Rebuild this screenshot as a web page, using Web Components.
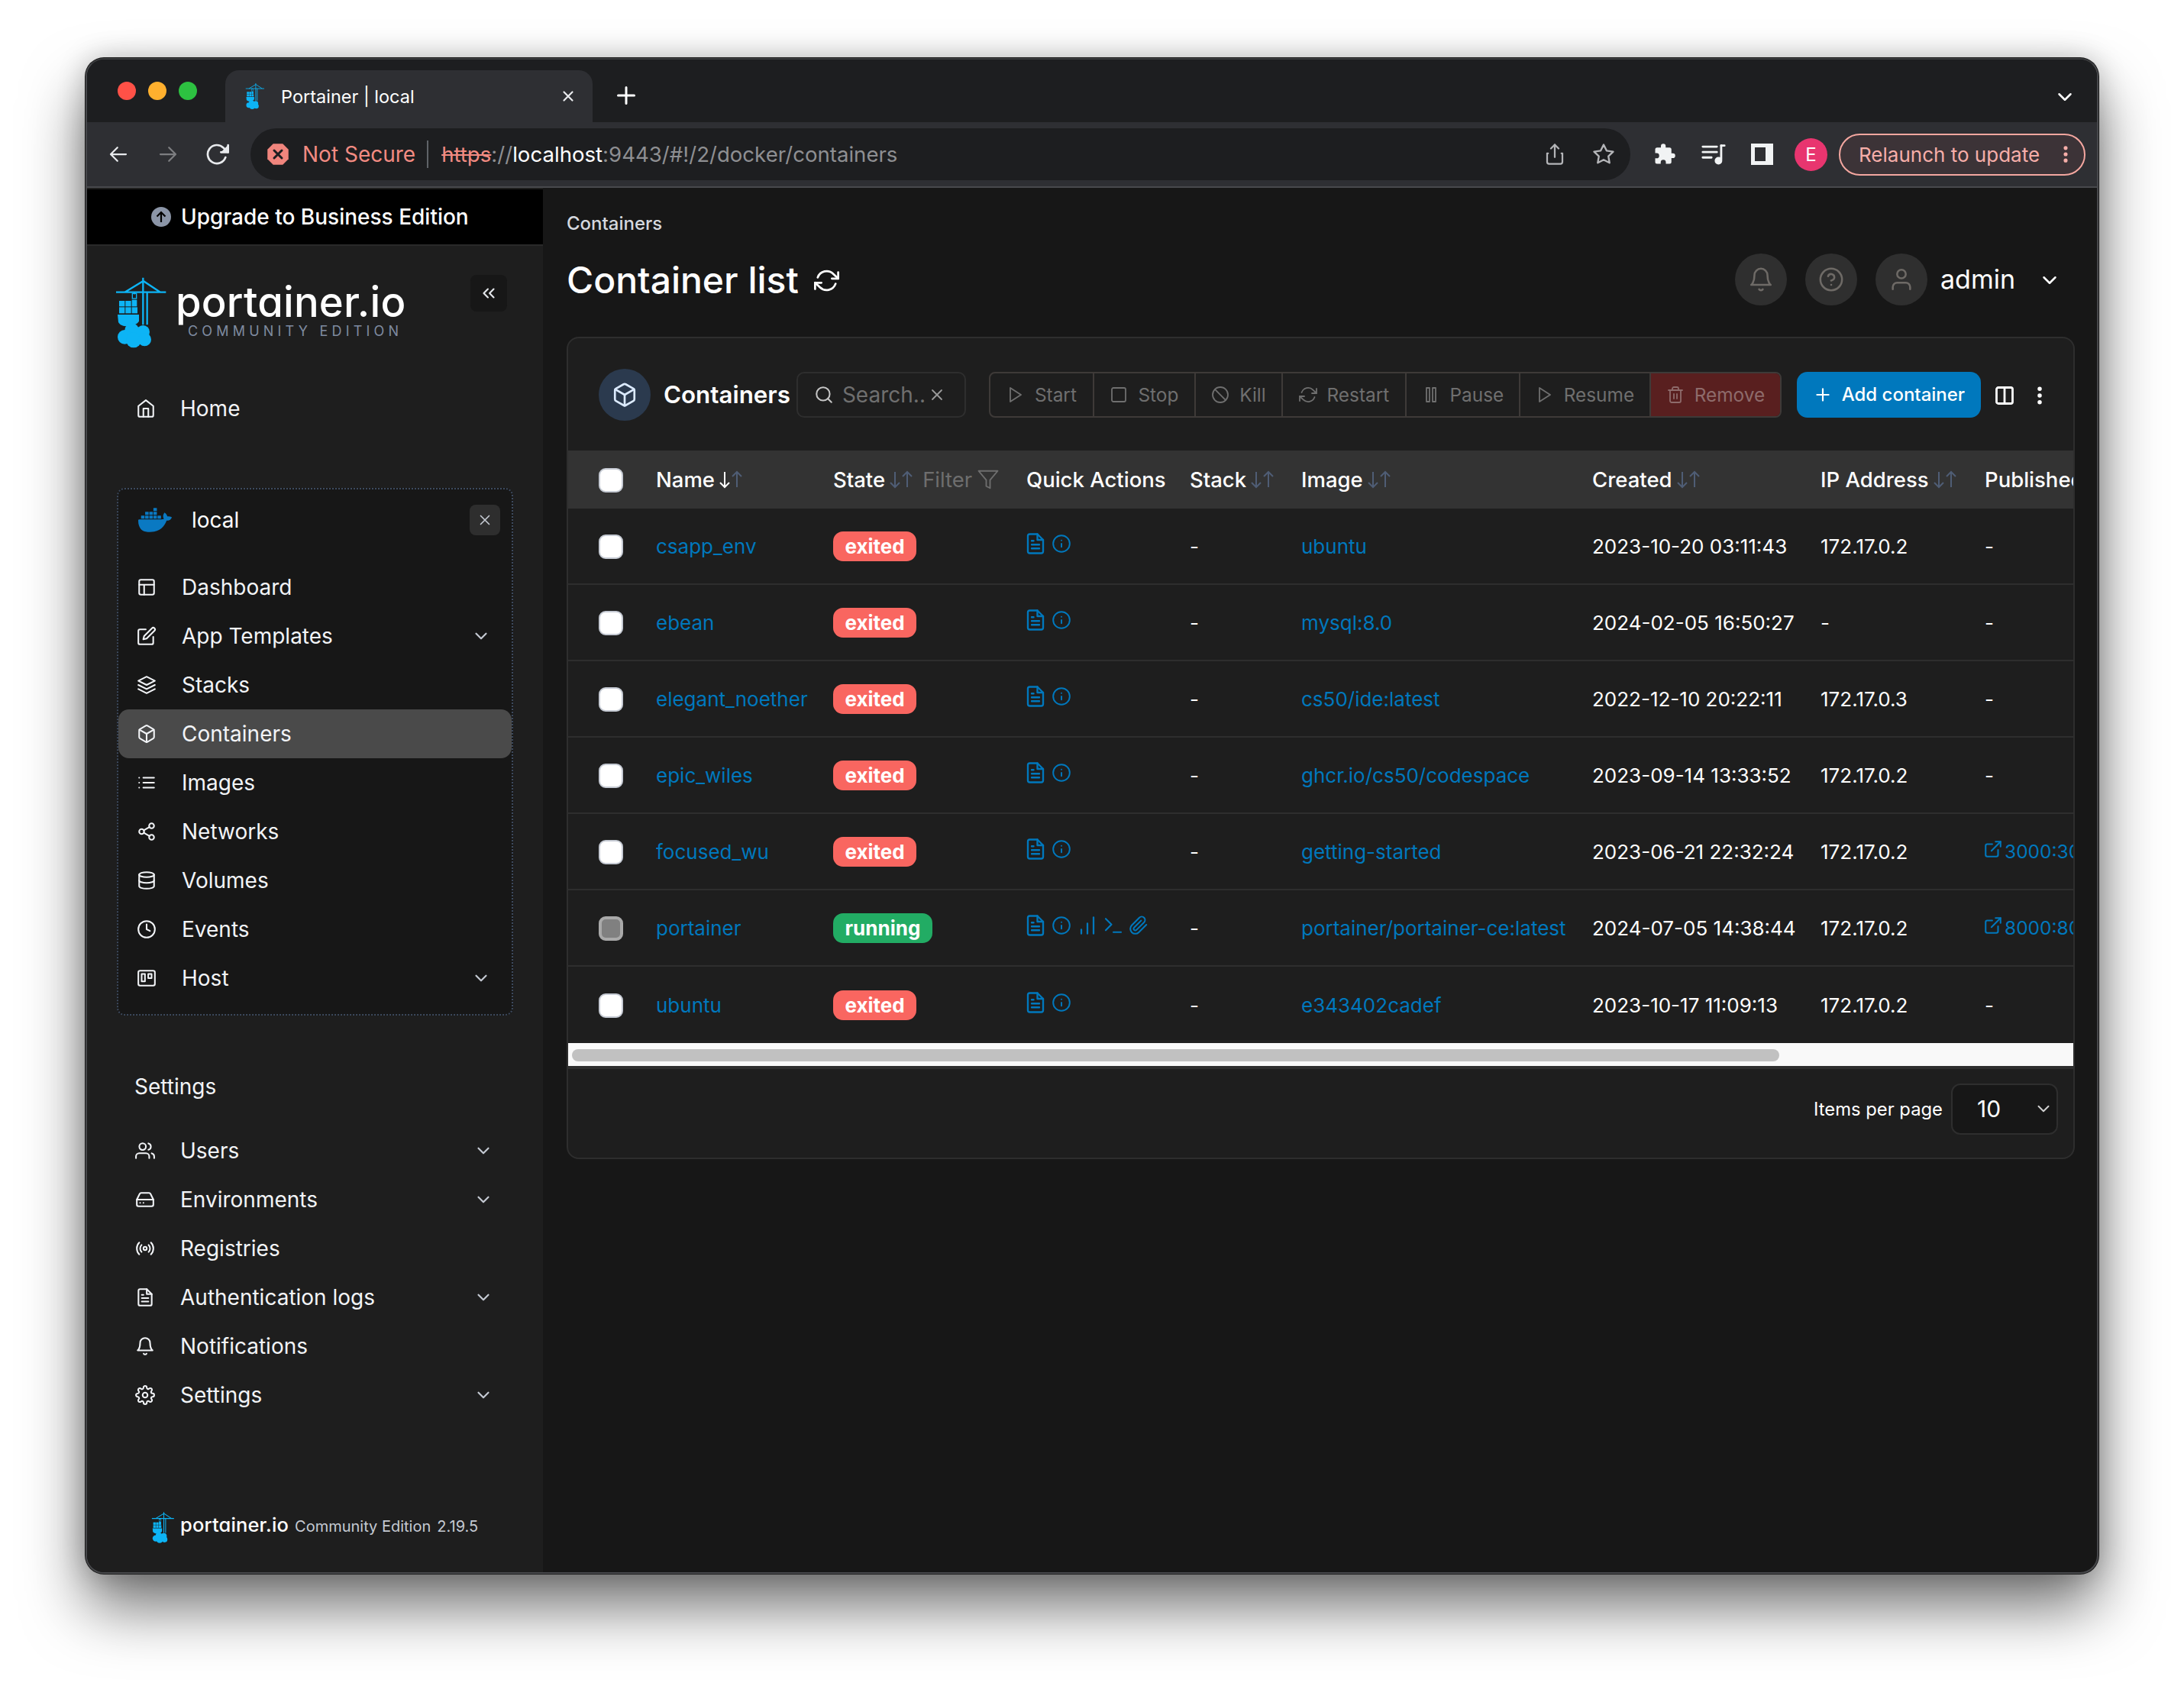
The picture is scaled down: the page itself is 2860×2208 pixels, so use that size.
<!DOCTYPE html>
<html>
<head>
<meta charset="utf-8">
<title>Portainer | local</title>
<style>
  html, body { margin: 0; padding: 0; background: #fff; }
  body { width: 2860px; height: 2208px; overflow: hidden; font-family: Inter, "Liberation Sans", sans-serif; }
</style>
</head>
<body>

<win-frame>
  <chrome-bar slot="chrome"></chrome-bar>
  <pt-sidebar slot="side">
    <side-item icon="home" x="64" text-x="122">Home</side-item>
  </pt-sidebar>
  <pt-main slot="main"></pt-main>
</win-frame>

<script>
const ICONS = {
  home: '<path d="M3 9l9-7 9 7v11a2 2 0 0 1-2 2H5a2 2 0 0 1-2-2z"/><path d="M9 22V12h6v10"/>',
  layout: '<rect x="3" y="3" width="18" height="18" rx="2"/><path d="M3 9h18M9 21V9"/>',
  edit: '<path d="M11 4H4a2 2 0 0 0-2 2v14a2 2 0 0 0 2 2h14a2 2 0 0 0 2-2v-7"/><path d="M18.5 2.5a2.121 2.121 0 0 1 3 3L12 15l-4 1 1-4 9.5-9.5z"/>',
  layers: '<path d="M12 2 2 7l10 5 10-5-10-5z"/><path d="M2 17l10 5 10-5"/><path d="M2 12l10 5 10-5"/>',
  box: '<path d="M21 16V8a2 2 0 0 0-1-1.73l-7-4a2 2 0 0 0-2 0l-7 4A2 2 0 0 0 3 8v8a2 2 0 0 0 1 1.73l7 4a2 2 0 0 0 2 0l7-4A2 2 0 0 0 21 16z"/><path d="M3.27 6.96 12 12.01l8.73-5.05"/><path d="M12 22.08V12"/>',
  list: '<path d="M8 6h13M8 12h13M8 18h13M3 6h.01M3 12h.01M3 18h.01"/>',
  share2: '<circle cx="18" cy="5" r="3"/><circle cx="6" cy="12" r="3"/><circle cx="18" cy="19" r="3"/><path d="M8.59 13.51l6.83 3.98M15.41 6.51l-6.82 3.98"/>',
  database: '<ellipse cx="12" cy="5" rx="9" ry="3"/><path d="M21 12c0 1.66-4 3-9 3s-9-1.34-9-3"/><path d="M3 5v14c0 1.66 4 3 9 3s9-1.34 9-3V5"/>',
  clock: '<circle cx="12" cy="12" r="10"/><path d="M12 6v6l4 2"/>',
  host: '<rect x="2" y="3" width="20" height="18" rx="2"/><rect x="6" y="7" width="4" height="9"/><rect x="14" y="7" width="4" height="5"/>',
  users: '<path d="M17 21v-2a4 4 0 0 0-4-4H5a4 4 0 0 0-4 4v2"/><circle cx="9" cy="7" r="4"/><path d="M23 21v-2a4 4 0 0 0-3-3.87"/><path d="M16 3.13a4 4 0 0 1 0 7.75"/>',
  drive: '<path d="M22 12H2"/><path d="M5.45 5.11 2 12v6a2 2 0 0 0 2 2h16a2 2 0 0 0 2-2v-6l-3.45-6.89A2 2 0 0 0 16.76 4H7.24a2 2 0 0 0-1.79 1.11z"/><path d="M6 16h.01M10 16h.01"/>',
  radio: '<circle cx="12" cy="12" r="2"/><path d="M16.24 7.76a6 6 0 0 1 0 8.49"/><path d="M7.76 16.24a6 6 0 0 1 0-8.49"/><path d="M19.07 4.93a10 10 0 0 1 0 14.14"/><path d="M4.93 19.07a10 10 0 0 1 0-14.14"/>',
  file: '<path d="M14 2H6a2 2 0 0 0-2 2v16a2 2 0 0 0 2 2h12a2 2 0 0 0 2-2V8z"/><path d="M14 2v6h6"/><path d="M16 13H8M16 17H8M10 9H8"/>',
  bell: '<path d="M18 8A6 6 0 0 0 6 8c0 7-3 9-3 9h18s-3-2-3-9"/><path d="M13.73 21a2 2 0 0 1-3.46 0"/>',
  settings: '<circle cx="12" cy="12" r="3"/><path d="M19.4 15a1.65 1.65 0 0 0 .33 1.82l.06.06a2 2 0 0 1 0 2.83 2 2 0 0 1-2.83 0l-.06-.06a1.65 1.65 0 0 0-1.82-.33 1.65 1.65 0 0 0-1 1.51V21a2 2 0 0 1-2 2 2 2 0 0 1-2-2v-.09A1.65 1.65 0 0 0 9 19.4a1.65 1.65 0 0 0-1.82.33l-.06.06a2 2 0 0 1-2.83 0 2 2 0 0 1 0-2.83l.06-.06a1.65 1.65 0 0 0 .33-1.82 1.65 1.65 0 0 0-1.51-1H3a2 2 0 0 1-2-2 2 2 0 0 1 2-2h.09A1.65 1.65 0 0 0 4.6 9a1.65 1.65 0 0 0-.33-1.82l-.06-.06a2 2 0 0 1 0-2.83 2 2 0 0 1 2.83 0l.06.06a1.65 1.65 0 0 0 1.82.33H9a1.65 1.65 0 0 0 1-1.51V3a2 2 0 0 1 2-2 2 2 0 0 1 2 2v.09a1.65 1.65 0 0 0 1 1.51 1.65 1.65 0 0 0 1.82-.33l.06-.06a2 2 0 0 1 2.83 0 2 2 0 0 1 0 2.83l-.06.06a1.65 1.65 0 0 0-.33 1.82V9a1.65 1.65 0 0 0 1.51 1H21a2 2 0 0 1 2 2 2 2 0 0 1-2 2h-.09a1.65 1.65 0 0 0-1.51 1z"/>',
  chevron: '<path d="M6 9l6 6 6-6"/>',
  x: '<path d="M18 6 6 18M6 6l12 12"/>',
  plus: '<path d="M12 5v14M5 12h14"/>',
  play: '<path d="M5 3l14 9-14 9V3z"/>',
  square: '<rect x="3" y="3" width="18" height="18" rx="2"/>',
  slash: '<circle cx="12" cy="12" r="10"/><path d="M4.93 4.93l14.14 14.14"/>',
  refresh: '<path d="M23 4v6h-6"/><path d="M1 20v-6h6"/><path d="M3.51 9a9 9 0 0 1 14.85-3.36L23 10M1 14l4.64 4.36A9 9 0 0 0 20.49 15"/>',
  pause: '<rect x="6" y="3" width="4" height="18"/><rect x="14" y="3" width="4" height="18"/>',
  trash: '<path d="M3 6h18"/><path d="M19 6v14a2 2 0 0 1-2 2H7a2 2 0 0 1-2-2V6m3 0V4a2 2 0 0 1 2-2h4a2 2 0 0 1 2 2v2"/><path d="M10 11v6M14 11v6"/>',
  search: '<circle cx="11" cy="11" r="8"/><path d="M21 21l-4.35-4.35"/>',
  filter: '<polygon points="22 3 2 3 10 12.46 10 19 14 21 14 12.46 22 3"/>',
  info: '<circle cx="12" cy="12" r="10"/><path d="M12 16v-4M12 8h.01"/>',
  bars: '<path d="M12 20V10M18 20V4M6 20v-4"/>',
  terminal: '<path d="M4 17l6-6-6-6"/><path d="M12 19h8"/>',
  clip: '<path d="M21.44 11.05l-9.19 9.19a6 6 0 0 1-8.49-8.49l9.19-9.19a4 4 0 0 1 5.66 5.66l-9.2 9.19a2 2 0 0 1-2.83-2.83l8.49-8.48"/>',
  external: '<path d="M18 13v6a2 2 0 0 1-2 2H5a2 2 0 0 1-2-2V8a2 2 0 0 1 2-2h6"/><path d="M15 3h6v6"/><path d="M10 14 21 3"/>',
  help: '<circle cx="12" cy="12" r="10"/><path d="M9.09 9a3 3 0 0 1 5.83 1c0 2-3 3-3 3"/><path d="M12 17h.01"/>',
  user: '<path d="M20 21v-2a4 4 0 0 0-4-4H8a4 4 0 0 0-4 4v2"/><circle cx="12" cy="7" r="4"/>',
  columns: '<rect x="3" y="3" width="18" height="18" rx="2"/><path d="M12 3v18"/>',
  back: '<path d="M20 12H4M11 19l-7-7 7-7"/>',
  forward: '<path d="M4 12h16M13 5l7 7-7 7"/>',
  reload: '<path d="M20.49 15a9 9 0 1 1-2.12-9.36L23 10"/><path d="M23 3v7h-7" fill="currentColor"/>',
  upload: '<path d="M5 11H4v9a2 2 0 0 0 2 2h12a2 2 0 0 0 2-2v-9h-1"/><path d="M16 6l-4-4-4 4"/><path d="M12 2v13"/>',
  star: '<polygon points="12 2 15.09 8.26 22 9.27 17 14.14 18.18 21.02 12 17.77 5.82 21.02 7 14.14 2 9.27 8.91 8.26 12 2"/>',
  media: '<path d="M2 5h13M2 10h13M2 15h8M19 4v13"/><path d="M19 4h3"/><circle cx="16.5" cy="18" r="2.5" fill="currentColor"/>',
  dots: '<circle cx="12" cy="5" r="1.2" fill="currentColor"/><circle cx="12" cy="12" r="1.2" fill="currentColor"/><circle cx="12" cy="19" r="1.2" fill="currentColor"/>',
  dblleft: '<path d="M11 17l-5-5 5-5M18 17l-5-5 5-5"/>'
};

const DOCKER = 'M13.983 11.078h2.119a.186.186 0 00.186-.185V9.006a.186.186 0 00-.186-.186h-2.119a.185.185 0 00-.185.185v1.888c0 .102.083.185.185.185m-2.954-5.43h2.118a.186.186 0 00.186-.186V3.574a.186.186 0 00-.186-.185h-2.118a.185.185 0 00-.185.185v1.888c0 .102.082.185.185.186m0 2.716h2.118a.187.187 0 00.186-.186V6.29a.186.186 0 00-.186-.185h-2.118a.185.185 0 00-.185.185v1.887c0 .102.082.185.185.186m-2.93 0h2.12a.186.186 0 00.184-.186V6.29a.185.185 0 00-.185-.185H8.1a.185.185 0 00-.185.185v1.887c0 .102.083.185.185.186m-2.964 0h2.119a.186.186 0 00.185-.186V6.29a.185.185 0 00-.185-.185H5.136a.186.186 0 00-.186.185v1.887c0 .102.084.185.186.186m5.893 2.715h2.118a.186.186 0 00.186-.185V9.006a.186.186 0 00-.186-.186h-2.118a.185.185 0 00-.185.185v1.888c0 .102.082.185.185.185m-2.93 0h2.12a.185.185 0 00.184-.185V9.006a.185.185 0 00-.184-.186h-2.12a.185.185 0 00-.184.185v1.888c0 .102.083.185.185.185m-2.964 0h2.119a.185.185 0 00.185-.185V9.006a.185.185 0 00-.184-.186h-2.12a.186.186 0 00-.186.186v1.887c0 .102.084.185.186.185m-2.92 0h2.12a.185.185 0 00.184-.185V9.006a.185.185 0 00-.184-.186h-2.12a.185.185 0 00-.185.185v1.888c0 .102.083.185.185.185M23.763 9.89c-.065-.051-.672-.51-1.954-.51-.338.001-.676.03-1.01.087-.248-1.7-1.653-2.53-1.716-2.566l-.344-.199-.226.327c-.284.438-.49.922-.612 1.43-.23.97-.09 1.882.403 2.661-.595.332-1.55.413-1.744.42H.751a.751.751 0 00-.75.748 11.376 11.376 0 00.692 4.062c.545 1.428 1.355 2.48 2.41 3.124 1.18.723 3.1 1.137 5.275 1.137.983.003 1.963-.086 2.93-.266a12.248 12.248 0 003.823-1.389c.98-.567 1.86-1.288 2.61-2.136 1.252-1.418 1.998-2.997 2.553-4.4h.221c1.372 0 2.215-.549 2.68-1.009.309-.293.55-.65.707-1.046l.098-.288Z';

// crane + cloud logo, coords taken from the 3x crop of the reference
function craneLogo(w, h) {
  return `<svg width="${w}" height="${h}" viewBox="60 60 210 285" style="display:block;flex:none">
    <g fill="none" stroke="#0db4f5" stroke-width="7">
      <path d="M66 122H262M172 65V250M188 122V250M100 122L173 78L240 122"/>
      <path d="M138 122v8" /></g>
    <g fill="#0db4f5">
      <rect x="130" y="127" width="16" height="20" fill="none" stroke="#0db4f5" stroke-width="4"/>
      <rect x="78" y="156" width="22" height="22"/><rect x="103" y="156" width="22" height="22"/>
      <rect x="78" y="181" width="22" height="24"/><rect x="103" y="181" width="22" height="24"/><rect x="128" y="181" width="22" height="24"/>
      <rect x="128" y="152" width="20" height="26"/>
      <path d="M72 210H156V235C150 255 90 268 75 240Z"/>
      <circle cx="128" cy="272" r="28"/><circle cx="172" cy="278" r="26"/><circle cx="100" cy="298" r="28"/>
      <circle cx="135" cy="310" r="30"/><circle cx="178" cy="308" r="26"/>
    </g>
  </svg>`;
}

function sortArrows(active) {
  const dn = active ? '#fff' : '#4f5d75';
  return `<svg width="32" height="24" viewBox="0 0 32 24" fill="none" stroke-width="2" style="flex:none;margin-left:5px">
    <path d="M8 2V22M2 16L8 22L14 16" stroke="${dn}"/><path d="M24 22V2M18 8L24 2L30 8" stroke="#4f5d75"/></svg>`;
}

class UiIcon extends HTMLElement {
  connectedCallback() {
    const size = this.getAttribute('size') || 24;
    const sw = this.getAttribute('sw') || 2;
    this.attachShadow({ mode: 'open' }).innerHTML = `
      <style>:host{display:inline-flex;flex:none;width:${size}px;height:${size}px}svg{display:block}</style>
      <svg width="${size}" height="${size}" viewBox="0 0 24 24" fill="none" stroke="currentColor" stroke-width="${sw}" stroke-linecap="round" stroke-linejoin="round">${ICONS[this.getAttribute('name')] || ''}</svg>`;
  }
}

class WinFrame extends HTMLElement {
  constructor() {
    super();
    this.attachShadow({ mode: 'open' }).innerHTML = `
      <style>
        :host {
          display: flex; flex-direction: column; box-sizing: border-box;
          width: 2636px; height: 1985px; margin: 76px 0 0 112px;
          border: 2px solid #47484b; border-top-color: #3a3b3d; border-radius: 24px;
          background: #171717; overflow: hidden;
          box-shadow: 0 0 0 1px #1a1a1a, 0 44px 80px rgba(0,0,0,.55), 0 0 36px rgba(0,0,0,.22);
        }
        .body { flex: 1; display: flex; min-height: 0; }
      </style>
      <slot name="chrome"></slot>
      <div class="body"><slot name="side"></slot><slot name="main"></slot></div>`;
  }
}

class ChromeBar extends HTMLElement {
  constructor() {
    super();
    this.attachShadow({ mode: 'open' }).innerHTML = `
      <style>
        :host { display: block; font-family: Inter, sans-serif; color: #fff; flex: none; }
        .strip { height: 82px; background: #1d1e20; display: flex; align-items: flex-end; position: relative; }
        .lights { display: flex; gap: 16px; padding: 0 0 29px 40px; width: 142px; box-sizing: border-box; align-self: flex-end; }
        .lights i { width: 24px; height: 24px; border-radius: 50%; flex: none; }
        .tab { width: 481px; height: 68px; background: #2e2f33; border-radius: 18px 18px 0 0; display: flex; align-items: center; box-sizing: border-box; padding-left: 26px; font-size: 23.5px; margin-left: 39px; }
        .tab span { margin-left: 21px; flex: 1; }
        .tab ui-icon { margin-right: 21px; }
        .plus { margin: 0 0 17px 26px; }
        .tail { margin: 0 0 18px auto; padding-right: 27px; }
        .tools { height: 84px; background: #2e2f33; border-bottom: 2px solid #48494d; display: flex; align-items: center; }
        .nav { display: flex; align-items: center; width: 214px; padding-left: 26px; box-sizing: border-box; flex: none; color: #e8eaed; }
        .addr { width: 1807px; height: 68px; background: #1d1e20; border-radius: 34px; display: flex; align-items: center; box-sizing: border-box; padding-left: 21px; font-size: 28px; flex: none; }
        .ns { color: #f28b82; margin-left: 17px; }
        .sep { width: 2px; height: 36px; background: #5f6368; margin: 0 17px 0 15px; }
        .url { color: #8e8f92; font-size: 27.6px; }
        .url s { color: #f28b82; }
        .url b { color: #fff; font-weight: 400; }
        .addr .r { margin-left: auto; display: flex; gap: 34px; padding-right: 20px; color: #b4b5b8; }
        .ext { display: flex; align-items: center; color: #f1f3f4; margin-left: 30px; gap: 32px; }
        .side { width: 29px; height: 28px; box-sizing: border-box; border: 5px solid #f1f3f4; border-right-width: 10px; flex: none; }
        .ava { width: 43px; height: 43px; border-radius: 50%; background: #e8356f; display: flex; align-items: center; justify-content: center; font-size: 24px; margin-left: 28px; flex: none; }
        .relaunch { margin-left: 15px; width: 323px; height: 55px; box-sizing: border-box; border: 2px solid #f4a7a0; border-radius: 28px; background: #3c3337; color: #f6aea9; display: flex; align-items: center; font-size: 26px; padding-left: 24px; flex: none; }
        .relaunch ui-icon { margin-left: auto; margin-right: 10px; }
      </style>
      <div class="strip">
        <div class="lights"><i style="background:#ff5147"></i><i style="background:#ffb02e"></i><i style="background:#2dc141"></i></div>
        <div class="tab">${craneLogo(26, 40)}<span>Portainer | local</span><ui-icon name="x" size="22" sw="2.4" style="color:#e8eaed"></ui-icon></div>
        <ui-icon class="plus" name="plus" size="36" sw="2"></ui-icon>
        <ui-icon class="tail" name="chevron" size="30" sw="2"></ui-icon>
      </div>
      <div class="tools">
        <div class="nav">
          <ui-icon name="back" size="30" sw="1.8"></ui-icon>
          <ui-icon name="forward" size="30" sw="1.8" style="color:#7d7e81;margin-left:35px"></ui-icon>
          <ui-icon name="reload" size="32" sw="2" style="margin-left:33px"></ui-icon>
        </div>
        <div class="addr">
          <svg width="30" height="30" viewBox="0 0 24 24" style="flex:none"><polygon points="7 1 17 1 23 7 23 17 17 23 7 23 1 17 1 7" fill="#f0857d"/><path d="M8 8l8 8M16 8l-8 8" stroke="#1d1e20" stroke-width="2.4" stroke-linecap="round"/></svg>
          <span class="ns">Not Secure</span><span class="sep"></span>
          <span class="url"><s>https</s>://<b>localhost</b>:9443/#!/2/docker/containers</span>
          <div class="r"><ui-icon name="upload" size="30" sw="1.8"></ui-icon><ui-icon name="star" size="30" sw="1.9"></ui-icon></div>
        </div>
        <div class="ext">
          <svg width="30" height="30" viewBox="0 0 24 24" fill="currentColor" style="flex:none"><path d="M20.5 11H19V7a2 2 0 0 0-2-2h-4V3.5a2.5 2.5 0 0 0-5 0V5H4a2 2 0 0 0-2 2v3.8h1.5a2.7 2.7 0 0 1 0 5.4H2V20a2 2 0 0 0 2 2h3.8v-1.5a2.7 2.7 0 0 1 5.4 0V22H17a2 2 0 0 0 2-2v-4h1.5a2.5 2.5 0 0 0 0-5z"/></svg>
          <ui-icon name="media" size="34" sw="2"></ui-icon>
          <div class="side"></div>
        </div>
        <div class="ava">E</div>
        <div class="relaunch">Relaunch to update<ui-icon name="dots" size="28" sw="2"></ui-icon></div>
      </div>`;
  }
}

class SideItem extends HTMLElement {
  connectedCallback() {
    const x = this.getAttribute('x') || 64, tx = this.getAttribute('text-x') || 122;
    const chev = this.hasAttribute('chevron');
    const cx = this.getAttribute('chev-r') || 31;
    this.attachShadow({ mode: 'open' }).innerHTML = `
      <style>
        :host { display: flex; align-items: center; height: 64px; box-sizing: border-box; font-size: 28px; color: #f2f4f7; padding-left: ${x}px; border-radius: 14px; }
        :host([active]) { background: #4a4a4a; height: 64px; }
        .ic { width: ${tx - x}px; flex: none; display: flex; }
        .lb { flex: 1; }
        .ch { color: #c5cad3; margin-right: ${cx}px; }
      </style>
      <div class="ic"><ui-icon name="${this.getAttribute('icon')}" size="${this.getAttribute('size') || 26}" sw="${this.getAttribute('sw') || 1.9}"></ui-icon></div>
      <div class="lb"><slot></slot></div>
      ${chev ? '<ui-icon class="ch" name="chevron" size="26" sw="2"></ui-icon>' : ''}`;
  }
}

class PtSidebar extends HTMLElement {
  constructor() {
    super();
    const env = [['layout','Dashboard'],['edit','App Templates',1],['layers','Stacks'],['box','Containers',0,1],['list','Images'],['share2','Networks'],['database','Volumes'],['clock','Events'],['host','Host',1]];
    const set = [['users','Users',1],['drive','Environments',1],['radio','Registries'],['file','Authentication logs',1],['bell','Notifications'],['settings','Settings',1]];
    this.attachShadow({ mode: 'open' }).innerHTML = `
      <style>
        :host { display: flex; flex-direction: column; width: 597px; height: 100%; background: #1e1e1e; font-family: Inter, sans-serif; color: #fff; flex: none; }
        .up { height: 72px; margin-top: 2px; background: #000; border-bottom: 2px solid #2a2a2a; display: flex; align-items: center; padding-left: 84px; font-size: 28px; font-weight: 500; gap: 13px; box-sizing: content-box; }
        .brand { height: 181px; box-sizing: border-box; padding: 38px 0 0 36px; display: flex; }
        .wm { margin-left: 10px; }
        .wm .t { font-size: 54.4px; line-height: 60px; font-weight: 500; font-feature-settings: "cv11"; letter-spacing: .2px; margin-top: 5px; }
        .wm .c { font-size: 18px; line-height: 20px; letter-spacing: 5.2px; color: #7f8ba0; margin: -1px 0 0 16px; white-space: nowrap; }
        .col { width: 48px; height: 48px; border-radius: 8px; background: #171717; margin-left: auto; margin-right: 47px; display: flex; align-items: center; justify-content: center; color: #e3e6ea; }
        .env { margin: 72px 25px 0 39px; width: 519px; box-sizing: border-box; height: 691px; border: 2px dotted #3d4a5e; border-radius: 10px; background: #171717; }
        .env-h { height: 40px; margin-top: 20px; display: flex; align-items: center; padding-left: 26px; font-size: 28px; }
        .env-h span { margin-left: 26px; flex: 1; }
        .close { width: 40px; height: 40px; background: #2e2e2e; border-radius: 8px; margin-right: 15px; display: flex; align-items: center; justify-content: center; color: #c5cad3; }
        .env-items { margin-top: 36px; }
        .head { font-size: 28px; margin: 76px 0 0 62px; line-height: 34px; color: #f2f4f7; }
        .set { margin-top: 35px; }
        .foot { margin-top: auto; height: 81px; display: flex; align-items: flex-start; padding-left: 84px; }
        .foot .t { font-size: 25.5px; font-weight: 500; font-feature-settings: "cv11"; margin: -1px 0 0 7px; line-height: 40px; letter-spacing: .15px; }
        .foot .c { font-size: 20px; color: #c5cad3; margin: 3px 0 0 8px; line-height: 36px; white-space: nowrap; }
        .foot .c + .c { margin-left: 8px; }
      </style>
      <div class="up">
        <svg width="26" height="26" viewBox="0 0 26 26" style="flex:none"><circle cx="13" cy="13" r="13" fill="#8b95a7"/><path d="M13 20V7M7.5 12.5L13 7l5.5 5.5" fill="none" stroke="#000" stroke-width="2.2"/></svg>
        <span>Upgrade to Business Edition</span>
      </div>
      <div class="brand">
        <div style="margin-top:2px">${craneLogo(70, 95)}</div>
        <div class="wm"><div class="t">portainer.io</div><div class="c">COMMUNITY EDITION</div></div>
        <div class="col"><ui-icon name="dblleft" size="26" sw="2"></ui-icon></div>
      </div>
      <slot></slot>
      <div class="env">
        <div class="env-h">
          <svg width="44" height="44" viewBox="0 0 24 24" fill="#0a79c2" style="flex:none"><path d="${DOCKER}"/></svg>
          <span>local</span>
          <div class="close"><ui-icon name="x" size="22" sw="1.8"></ui-icon></div>
        </div>
        <div class="env-items">
          ${env.map(([i, l, c, a]) => `<side-item icon="${i}" x="24" text-x="83" chev-r="27" ${c ? 'chevron' : ''} ${a ? 'active' : ''}>${l}</side-item>`).join('')}
        </div>
      </div>
      <div class="head">Settings</div>
      <div class="set">
        ${set.map(([i, l, c]) => `<side-item icon="${i}" x="63" text-x="122" chev-r="65" ${c ? 'chevron' : ''}>${l}</side-item>`).join('')}
      </div>
      <div class="foot">
        ${craneLogo(31, 45)}
        <div class="t">portainer.io</div><div class="c">Community Edition</div><div class="c">2.19.5</div>
      </div>`;
  }
}

class StateBadge extends HTMLElement {
  constructor() {
    super();
    this.attachShadow({ mode: 'open' }).innerHTML = `
      <style>
        :host { display: inline-flex; align-items: center; height: 39px; border-radius: 13px; padding: 0 15.5px; background: #f96660; color: #fff; font-size: 26px; font-weight: 700; }
        :host([state="running"]) { background: #22ac64; }
      </style><slot></slot>`;
  }
}

class ActionBtn extends HTMLElement {
  connectedCallback() {
    this.attachShadow({ mode: 'open' }).innerHTML = `
      <style>
        :host { display: flex; align-items: center; height: 100%; box-sizing: border-box; font-size: 24.4px; color: #6f6f6f; justify-content: center; gap: 13px; border-right: 2px solid #3e3a38; }
        :host(:last-child) { border-right: 0; }
        :host([danger]) { background: #591f1f; color: #8e6b6b; }
      </style>
      <ui-icon name="${this.getAttribute('icon')}" size="${this.getAttribute('size') || 24}" sw="1.8"></ui-icon><slot></slot>`;
  }
}

class CtHead extends HTMLElement {
  constructor() {
    super();
    const c = (t, a) => `<div class="c"><span>${t}</span>${sortArrows(a)}</div>`;
    this.attachShadow({ mode: 'open' }).innerHTML = `
      <style>
        :host { display: grid; grid-template-columns: var(--cols); height: 76px; background: #333; color: #fff; font-size: 27.5px; font-weight: 500; align-items: center; white-space: nowrap; }
        .c { display: flex; align-items: center; overflow: hidden; }
        .cb { width: 32px; height: 32px; box-sizing: border-box; background: #fff; border: 2px solid #c5cad3; border-radius: 9px; margin: 1px 0 0 40px; }
        .f { color: #6e6e6e; font-weight: 400; margin-left: 12px; }
        .last { overflow: hidden; }
      </style>
      <div><div class="cb"></div></div>
      ${c('Name', true)}
      <div class="c"><span>State</span>${sortArrows()}<span class="f">Filter</span><ui-icon name="filter" size="30" sw="1.5" style="color:#6e6e6e;margin-left:6px"></ui-icon></div>
      <div>Quick Actions</div>
      ${c('Stack')}${c('Image')}${c('Created')}${c('IP Address')}
      <div class="last">Published Ports</div>`;
  }
}

class CtRow extends HTMLElement {
  connectedCallback() {
    const a = n => this.getAttribute(n);
    const run = a('state') === 'running';
    const port = a('port');
    this.attachShadow({ mode: 'open' }).innerHTML = `
      <style>
        :host { display: grid; grid-template-columns: var(--cols); height: 100px; box-sizing: border-box; border-bottom: 2px solid #2e2e2e; font-size: 26px; color: #fff; align-items: center; white-space: nowrap; }
        :host([last]) { border-bottom: 0; height: 100px; }
        .cb { width: 32px; height: 32px; box-sizing: border-box; background: #fff; border: 2px solid #c5cad3; border-radius: 9px; margin: 2px 0 0 40px; }
        .cb.off { background: #808080; border: 4px solid #a9a9a9; }
        .l { color: #0078bd; overflow: hidden; }
        .qa { display: flex; align-items: center; color: #0078bd; margin: 0 0 7px -3px; }
        .port { display: flex; align-items: center; color: #0078bd; margin-left: -2px; overflow: hidden; font-size: 24.5px; }
        .port ui-icon { margin: 0 2px 7px 0; }
      </style>
      <div><div class="cb ${a('off') !== null ? 'off' : ''}"></div></div>
      <div class="l">${a('name')}</div>
      <div><state-badge state="${a('state')}">${a('state')}</state-badge></div>
      <div class="qa">
        <ui-icon name="file" size="30" sw="1.9"></ui-icon>
        <ui-icon name="info" size="26" sw="1.8" style="margin-left:6px"></ui-icon>
        ${run ? `<ui-icon name="bars" size="32" sw="1.7" style="margin-left:5px"></ui-icon>
        <ui-icon name="terminal" size="30" sw="1.7" style="margin-left:3px"></ui-icon>
        <ui-icon name="clip" size="26" sw="1.9" style="margin-left:5px"></ui-icon>` : ''}
      </div>
      <div>-</div>
      <div class="l">${a('image')}</div>
      <div>${a('created')}</div>
      <div>${a('ip')}</div>
      ${port ? `<div class="port"><ui-icon name="external" size="26" sw="1.9"></ui-icon>${port}</div>` : '<div>-</div>'}`;
  }
}

class ContainersCard extends HTMLElement {
  constructor() {
    super();
    const rows = [
      ['csapp_env','exited','ubuntu','2023-10-20 03:11:43','172.17.0.2',''],
      ['ebean','exited','mysql:8.0','2024-02-05 16:50:27','-',''],
      ['elegant_noether','exited','cs50/ide:latest','2022-12-10 20:22:11','172.17.0.3',''],
      ['epic_wiles','exited','ghcr.io/cs50/codespace','2023-09-14 13:33:52','172.17.0.2',''],
      ['focused_wu','exited','getting-started','2023-06-21 22:32:24','172.17.0.2','3000:3000'],
      ['portainer','running','portainer/portainer-ce:latest','2024-07-05 14:38:44','172.17.0.2','8000:8000'],
      ['ubuntu','exited','e343402cadef','2023-10-17 11:09:13','172.17.0.2','']
    ];
    this.attachShadow({ mode: 'open' }).innerHTML = `
      <style>
        :host { display: block; box-sizing: border-box; width: 1975px; height: 1077px; border: 2px solid #2e2e2e; border-radius: 16px; background: #1e1e1e; overflow: hidden; --cols: 115px 232px 253px 214px 146px 381px 299px 215px 116px; }
        .head { height: 147px; box-sizing: border-box; display: flex; align-items: center; padding: 0 0 0 40px; }
        .badge { width: 68px; height: 68px; border-radius: 50%; background: #2b3a4e; color: #dbeafe; display: flex; align-items: center; justify-content: center; flex: none; }
        h2 { margin: 0 0 0 17px; font-size: 31.3px; font-weight: 600; color: #fff; white-space: nowrap; }
        .search { width: 222px; height: 60px; box-sizing: border-box; border: 2px solid #2e2e2e; border-radius: 10px; margin-left: 8px; display: flex; align-items: center; padding-left: 21px; color: #c5c5c5; font-size: 28px; flex: none; }
        .search span { color: #6f6f6f; margin-left: 11px; width: 112px; }
        .group { width: 1038px; height: 60px; box-sizing: border-box; border: 2px solid #3e3a38; border-radius: 8px; margin-left: 30px; display: grid; grid-template-columns: 136px 133px 114px 162px 149px 171px 1fr; overflow: hidden; flex: none; }
        .add { width: 241px; height: 60px; background: #0078bd; border-radius: 14px; margin-left: 20px; color: #fff; font-size: 24px; font-weight: 500; display: flex; align-items: center; justify-content: center; gap: 12px; flex: none; }
        .cols { color: #fff; margin: 3px 0 0 17px; display: flex; }
        .dots { color: #fff; margin: 3px 0 0 17px; display: flex; }
        .table { width: 100%; overflow: hidden; }
        .scroll { height: 30px; background: #f9f9f9; padding: 8px 0 0 5px; box-sizing: border-box; }
        .scroll i { display: block; width: 1581px; height: 16px; background: #c1c1c1; border-radius: 8px; }
        .pager { border-top: 4px solid #2e2e2e; height: 118px; box-sizing: border-box; display: flex; align-items: center; justify-content: flex-end; padding: 0 20px 10px 0; color: #fff; font-size: 23.8px; }
        .sel { width: 140px; height: 67px; box-sizing: border-box; border: 2px solid #2e2e2e; border-radius: 12px; background: #171717; margin-left: 11px; display: flex; align-items: center; padding-left: 32px; font-size: 30px; }
        .sel ui-icon { margin-left: auto; margin-right: 4px; color: #d0d0d0; }
      </style>
      <div class="head">
        <div class="badge"><ui-icon name="box" size="34" sw="1.9"></ui-icon></div>
        <h2>Containers</h2>
        <div class="search"><ui-icon name="search" size="26" sw="1.9"></ui-icon><span>Search..</span><ui-icon name="x" size="24" sw="1.8" style="color:#9a9a9a"></ui-icon></div>
        <div class="group">
          <action-btn icon="play">Start</action-btn>
          <action-btn icon="square">Stop</action-btn>
          <action-btn icon="slash">Kill</action-btn>
          <action-btn icon="refresh">Restart</action-btn>
          <action-btn icon="pause">Pause</action-btn>
          <action-btn icon="play">Resume</action-btn>
          <action-btn icon="trash" danger>Remove</action-btn>
        </div>
        <div class="add"><ui-icon name="plus" size="26" sw="2"></ui-icon>Add container</div>
        <div class="cols"><ui-icon name="columns" size="28" sw="2.4"></ui-icon></div>
        <div class="dots"><ui-icon name="dots" size="30" sw="2"></ui-icon></div>
      </div>
      <div class="table">
        <ct-head></ct-head>
        ${rows.map((r, i) => `<ct-row name="${r[0]}" state="${r[1]}" image="${r[2]}" created="${r[3]}" ip="${r[4]}" port="${r[5]}" ${r[1] === 'running' ? 'off' : ''} ${i === 6 ? 'last' : ''}></ct-row>`).join('')}
      </div>
      <div class="scroll"><i></i></div>
      <div class="pager">Items per page<div class="sel">10<ui-icon name="chevron" size="26" sw="1.8"></ui-icon></div></div>`;
  }
}

class PtMain extends HTMLElement {
  constructor() {
    super();
    this.attachShadow({ mode: 'open' }).innerHTML = `
      <style>
        :host { display: block; flex: 1; min-width: 0; padding: 0 29px 0 31px; font-family: Inter, sans-serif; color: #fff; }
        .top { height: 195px; box-sizing: border-box; display: flex; }
        .crumb { font-size: 24px; line-height: 30px; padding-top: 32px; color: #d5d8de; font-weight: 500; margin-bottom: -2px; }
        h1 { margin: 31px 0 0; font-size: 48px; line-height: 60px; font-weight: 500; display: flex; align-items: center; gap: 20px; white-space: nowrap; }
        .user { margin-left: auto; display: flex; align-items: flex-start; padding-top: 86px; }
        .dot { width: 68px; height: 68px; border-radius: 50%; background: #2f2f2f; display: flex; align-items: center; justify-content: center; color: #6e6a66; margin-right: 24px; }
        .dot:nth-child(3) { margin-right: 25px; }
        .name { font-size: 34px; line-height: 68px; margin-left: -8px; }
        .user .chev { margin: 20px 18px 0 30px; }
      </style>
      <div class="top">
        <div>
          <div class="crumb">Containers</div>
          <h1>Container list <ui-icon name="refresh" size="33" sw="2"></ui-icon></h1>
        </div>
        <div class="user">
          <div class="dot"><ui-icon name="bell" size="34" sw="1.8"></ui-icon></div>
          <div class="dot"><ui-icon name="help" size="34" sw="1.8"></ui-icon></div>
          <div class="dot"><ui-icon name="user" size="34" sw="1.8"></ui-icon></div>
          <div class="name">admin</div>
          <ui-icon class="chev" name="chevron" size="30" sw="2"></ui-icon>
        </div>
      </div>
      <containers-card></containers-card>`;
  }
}

customElements.define('ui-icon', UiIcon);
customElements.define('state-badge', StateBadge);
customElements.define('action-btn', ActionBtn);
customElements.define('side-item', SideItem);
customElements.define('ct-head', CtHead);
customElements.define('ct-row', CtRow);
customElements.define('containers-card', ContainersCard);
customElements.define('chrome-bar', ChromeBar);
customElements.define('pt-sidebar', PtSidebar);
customElements.define('pt-main', PtMain);
customElements.define('win-frame', WinFrame);
</script>
</body>
</html>
